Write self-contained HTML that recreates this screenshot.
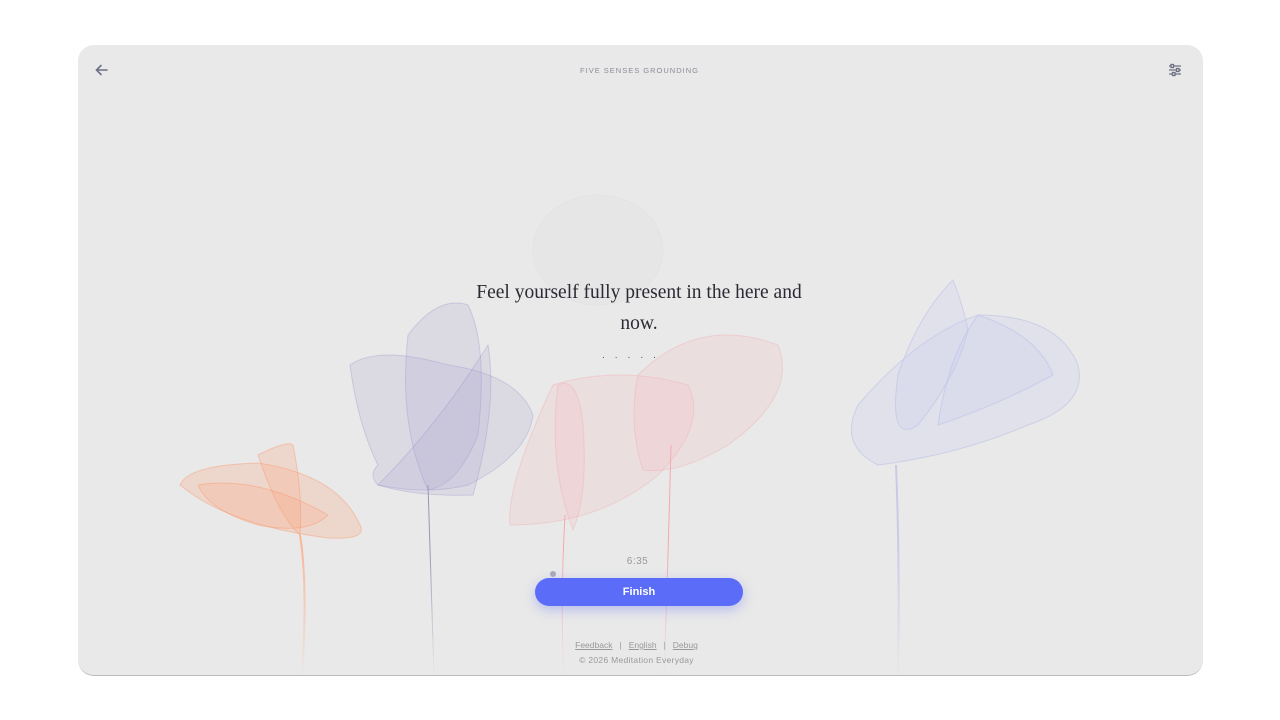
<!DOCTYPE html>
<html><head><meta charset="utf-8"><style>
body{margin:0;width:1280px;height:720px;background:#fff;font-family:"Liberation Sans",sans-serif;position:relative;overflow:hidden}
.card{position:absolute;left:78px;top:45px;width:1125px;height:630px;background:#e9e9e9;border-radius:16px;overflow:hidden;border-bottom:1px solid #bbb}
.title{position:absolute;top:21px;left:-1px;width:100%;text-align:center;font-size:7.5px;letter-spacing:1px;color:#8a8c96}
.q{position:absolute;left:380px;top:232px;width:362px;text-align:center;font-family:"Liberation Serif",serif;font-size:19.5px;line-height:31px;color:#2a2a33}
.dots{position:absolute;left:524px;top:305px;font-size:10px;color:#555;letter-spacing:10px}
.time{position:absolute;left:-3px;width:100%;top:511px;text-align:center;font-size:10px;color:#999;letter-spacing:.5px}
.btn{position:absolute;left:457px;top:533px;width:208px;height:28px;border-radius:14px;background:#5b6cf9;color:#fff;font-size:11px;font-weight:bold;text-align:center;line-height:28px;box-shadow:0 4px 12px rgba(91,108,249,.35)}
.links{position:absolute;left:-4px;width:100%;top:595px;text-align:center;font-size:8.5px;color:#999}
.links u{margin:0 7px}
.copy{position:absolute;left:-4px;width:100%;top:610px;text-align:center;font-size:8.5px;color:#999;letter-spacing:.3px}
</style></head><body>
<div class="card">
<svg width="1125" height="630" style="position:absolute;left:0;top:0">
<defs><linearGradient id="f" x1="0" y1="0" x2="0" y2="1"><stop offset="0" stop-color="#fff"/><stop offset=".8" stop-color="#fff"/><stop offset="1" stop-color="#000"/></linearGradient><mask id="m"><rect width="1125" height="630" fill="url(#f)"/></mask></defs>
<g fill="none" mask="url(#m)">
<path d="M222 490 Q230 540 224 630" stroke="#f9b79a" stroke-width="2"/>
<g fill="#fba37b" fill-opacity=".25" stroke="#f99a6d" stroke-opacity=".45">
<path d="M102 440 Q110 420 180 418 Q260 430 282 480 Q290 495 250 493 Q150 480 102 440Z"/>
<path d="M180 410 Q210 395 215 400 Q225 450 222 490 Q200 470 180 410Z"/>
<path d="M120 440 Q180 430 250 470 Q230 490 180 480 Q130 465 120 440Z"/>
</g>
<path d="M350 440 Q353 540 356 630" stroke="#9a95b8" stroke-width="1"/>
<g fill="#a79fcc" fill-opacity=".2" stroke="#9a90c8" stroke-opacity=".35">
<path d="M272 320 Q300 300 370 320 Q440 330 455 370 Q450 410 390 440 Q350 450 300 440 Q290 430 300 420 Q280 380 272 320Z"/>
<path d="M330 290 Q360 250 390 260 Q410 300 400 390 Q380 440 350 445 Q320 380 330 290Z"/>
<path d="M300 440 Q360 380 410 300 Q420 360 395 450 Q340 452 300 440Z"/>
</g>
<path d="M487 470 Q482 560 486 630" stroke="#f2a9b0" stroke-width="1"/>
<path d="M593 400 Q590 520 586 630" stroke="#f2a9b0" stroke-width="1"/>
<g fill="#f5b2b8" fill-opacity=".2" stroke="#f2a2aa" stroke-opacity=".35">
<path d="M475 340 Q540 320 610 340 Q630 380 580 430 Q520 480 432 480 Q428 440 475 340Z"/>
<path d="M480 340 Q500 330 505 380 Q510 450 495 485 Q470 420 480 340Z"/>
<path d="M560 330 Q620 270 700 300 Q720 350 650 400 Q600 430 565 425 Q550 380 560 330Z"/>
</g>
<ellipse cx="520" cy="205" rx="65" ry="55" fill="#e2e2e2" fill-opacity=".3" stroke="#ddd" stroke-opacity=".4"/>
<path d="M818 420 Q822 520 820 630" stroke="#c9cbe6" stroke-width="2"/>
<g fill="#c8cdf0" fill-opacity=".25" stroke="#b6bce8" stroke-opacity=".5">
<path d="M780 360 Q840 290 900 270 Q980 270 1000 320 Q1010 360 950 380 Q880 410 800 420 Q760 400 780 360Z"/>
<path d="M875 235 Q885 260 890 285 Q880 330 840 380 Q810 400 820 330 Q840 270 875 235Z"/>
<path d="M900 270 Q960 290 975 330 Q920 360 860 380 Q870 310 900 270Z"/>
</g>
</g>
<circle cx="475" cy="529" r="3" fill="#aab"/>
</svg>
<svg style="position:absolute;left:17px;top:19px" width="14" height="12" viewBox="0 0 14 12"><path d="M12 6H2M6 1.5L1.5 6 6 10.5" stroke="#6e7183" stroke-width="1.6" fill="none" stroke-linecap="round"/></svg>
<svg style="position:absolute;left:1090px;top:18px" width="14" height="14" viewBox="0 0 14 14" stroke="#6e7183" stroke-width="1.3" fill="none"><path d="M1 3h12M1 7h12M1 11h12"/><rect x="3" y="1.5" width="2.5" height="3" fill="#e9e9e9"/><rect x="8.5" y="5.5" width="2.5" height="3" fill="#e9e9e9"/><rect x="4.5" y="9.5" width="2.5" height="3" fill="#e9e9e9"/></svg>
<div class="title">FIVE SENSES GROUNDING</div>
<div class="q">Feel yourself fully present in the here and now.</div>
<div class="dots">.....</div>
<div class="time">6:35</div>
<div class="btn">Finish</div>
<div class="links"><u>Feedback</u>|<u>English</u>|<u>Debug</u></div>
<div class="copy">© 2026 Meditation Everyday</div>
</div>
</body></html>
